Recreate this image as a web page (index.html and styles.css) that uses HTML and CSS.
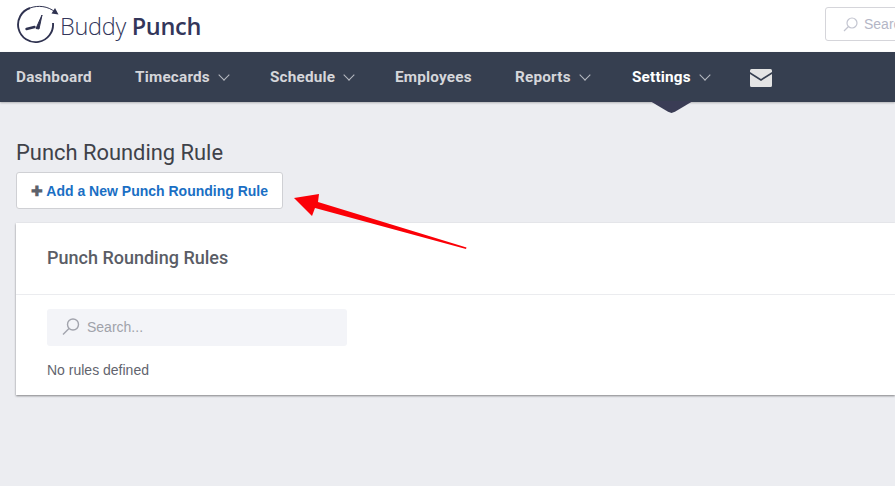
FILE: index.html
```html
<!DOCTYPE html>
<html>
<head>
    <link rel="stylesheet" href="styles.css">
    <title>Punch Rounding Rule</title>
</head>
<body>
<header class="top-bar">
    <div class="logo">
        <svg class="logo-mark" width="44" height="44" viewBox="0 0 44 44" fill="none">
            <path d="M37 19A17.5 17.5 0 1 1 14 4" stroke="#2f3250" stroke-width="1.9"/>
            <path d="M14 4C22 1 32 2 39 8" stroke="#2f3250" stroke-width="1"/>
            <path d="M42.5 10.5L39 4L35.5 9.5Z" fill="#2f3250"/>
            <path d="M20 24.5L26 11L23 25Z" fill="#2f3250" stroke="#2f3250" stroke-width="1" stroke-linejoin="round"/>
            <path d="M10.5 25L18.5 23" stroke="#2f3250" stroke-width="2.4" stroke-linecap="round"/>
        </svg>
        <span class="logo-text">Buddy <b>Punch</b></span>
    </div>
    <div class="top-search">
        <svg width="17" height="17" viewBox="0 0 17 17" fill="none" stroke="#c3c5d0" stroke-width="1.2">
            <circle cx="10" cy="7" r="5"/>
            <path d="M6.5 10.5L2 15"/>
        </svg>
        <span>Search</span>
    </div>
</header>

<nav class="main-nav">
    <a class="nav-item">Dashboard</a>
    <a class="nav-item">Timecards <i class="chev"></i></a>
    <a class="nav-item">Schedule <i class="chev"></i></a>
    <a class="nav-item">Employees</a>
    <a class="nav-item">Reports <i class="chev"></i></a>
    <a class="nav-item active">Settings <i class="chev"></i></a>
    <svg class="mail" width="22" height="18" viewBox="0 0 22 18">
        <path d="M1.5 0H20.5Q22 0 22 1.5V3L11 10L0 3V1.5Q0 0 1.5 0Z" fill="#e4e4e4"/>
        <path d="M0 5L11 12L22 5V16.5Q22 18 20.5 18H1.5Q0 18 0 16.5Z" fill="#e4e4e4"/>
    </svg>
</nav>

<main class="content">
    <h1 class="page-title">Punch Rounding Rule</h1>
    <button class="add-btn"><span class="plus">&#10010;</span> Add a New Punch Rounding Rule</button>

    <section class="card">
        <h2 class="card-title">Punch Rounding Rules</h2>
        <div class="card-body">
            <div class="search-box">
                <svg width="18" height="18" viewBox="0 0 18 18" fill="none" stroke="#a2a4ad" stroke-width="1.4">
                    <circle cx="11" cy="6.5" r="5.5"/>
                    <path d="M7 10.5L1 16.5"/>
                </svg>
                <span>Search...</span>
            </div>
            <p class="empty">No rules defined</p>
        </div>
    </section>
</main>

<svg class="arrow" width="180" height="64" viewBox="0 0 180 64">
    <path d="M173.5 57.5L173 59L22 18L19 26L1 8L26 4L25 12Z" fill="#fb0007"/>
</svg>
</body>
</html>
```

FILE: styles.css
```css
body, html {
    margin: 0;
    padding: 0;
    height: 100%;
    overflow: hidden;
    background: #ecedf1;
    font-family: Roboto, "Liberation Sans", sans-serif;
}

.top-bar {
    height: 52px;
    background: white;
    display: flex;
    justify-content: space-between;
    align-items: center;
    padding-left: 16px;
    box-sizing: border-box;
    overflow: hidden;
}

.logo {
    display: flex;
    align-items: center;
}

.logo-text {
    font-family: "Open Sans", sans-serif;
    font-size: 23.5px;
    font-weight: 300;
    color: #33365a;
    letter-spacing: -0.3px;
}

.logo-text b {
    font-weight: 600;
}

.top-search {
    width: 90px;
    height: 32px;
    margin-right: -38px;
    margin-top: -4px;
    flex-shrink: 0;
    border: 1px solid #d5d5da;
    border-radius: 3px;
    display: flex;
    align-items: center;
    gap: 5px;
    padding-left: 16px;
    font-family: "Liberation Sans", sans-serif;
    font-size: 14px;
    color: #b4b6c6;
}

.main-nav {
    height: 50px;
    background: #363f50;
    display: grid;
    grid-template-columns: 119px 135px 125px 120px 117px 118px 22px;
    align-items: center;
    padding-left: 16px;
    box-shadow: 0 1px 2px rgba(0,0,0,0.25);
}

.nav-item {
    position: relative;
    font-size: 15.3px;
    font-weight: 700;
    letter-spacing: 0.2px;
    color: #d5d6da;
    white-space: nowrap;
}

.nav-item.active {
    color: white;
}

/* little notch under the current page */
.nav-item.active::after {
    content: "";
    position: absolute;
    left: 18px;
    bottom: -27px;
    width: 43px;
    height: 12px;
    background: #3a3c55;
    clip-path: polygon(0 0, 100% 0, 58% 90%, 50% 100%, 42% 90%);
}

.chev {
    display: inline-block;
    width: 7px;
    height: 7px;
    margin: 0 3px 3px 6px;
    border-right: 1px solid #b8bac2;
    border-bottom: 1px solid #b8bac2;
    transform: rotate(45deg);
}

.mail {
    margin-top: 2px;
}

.content {
    padding: 38px 0 0 16px;
}

.page-title {
    margin: 0;
    font-size: 21.9px;
    line-height: 26px;
    font-weight: 400;
    color: #3f4249;
}

.add-btn {
    display: block;
    margin-top: 6px;
    width: 267px;
    height: 37px;
    padding: 0;
    background: white;
    border: 1px solid #cfd0d4;
    border-radius: 3px;
    font-family: "Liberation Sans", sans-serif;
    font-size: 14px;
    font-weight: 700;
    color: #1a6fc4;
}

.plus {
    color: #5d616b;
}

.card {
    margin-top: 14px;
    background: white;
    height: 172px;
    box-shadow: 0 1px 2px rgba(0,0,0,0.45);
}

.card-title {
    margin: 0;
    height: 72px;
    padding-left: 31px;
    box-sizing: border-box;
    border-bottom: 1px solid #ebecef;
    font-size: 18px;
    line-height: 70px;
    font-weight: 500;
    color: #5a5d66;
}

.card-body {
    padding: 14px 0 0 31px;
}

.search-box {
    width: 300px;
    height: 37px;
    background: #f3f4f8;
    border-radius: 3px;
    display: flex;
    align-items: center;
    gap: 7px;
    padding: 0 0 2px 15px;
    box-sizing: border-box;
    font-family: "Liberation Sans", sans-serif;
    font-size: 14px;
    color: #a0a2aa;
}

.empty {
    margin: 16px 0 0;
    font-family: "Liberation Sans", sans-serif;
    font-size: 14px;
    line-height: 17px;
    color: #62646e;
}

/* annotation drawn on top of the page */
.arrow {
    position: absolute;
    left: 293px;
    top: 190px;
}
```
